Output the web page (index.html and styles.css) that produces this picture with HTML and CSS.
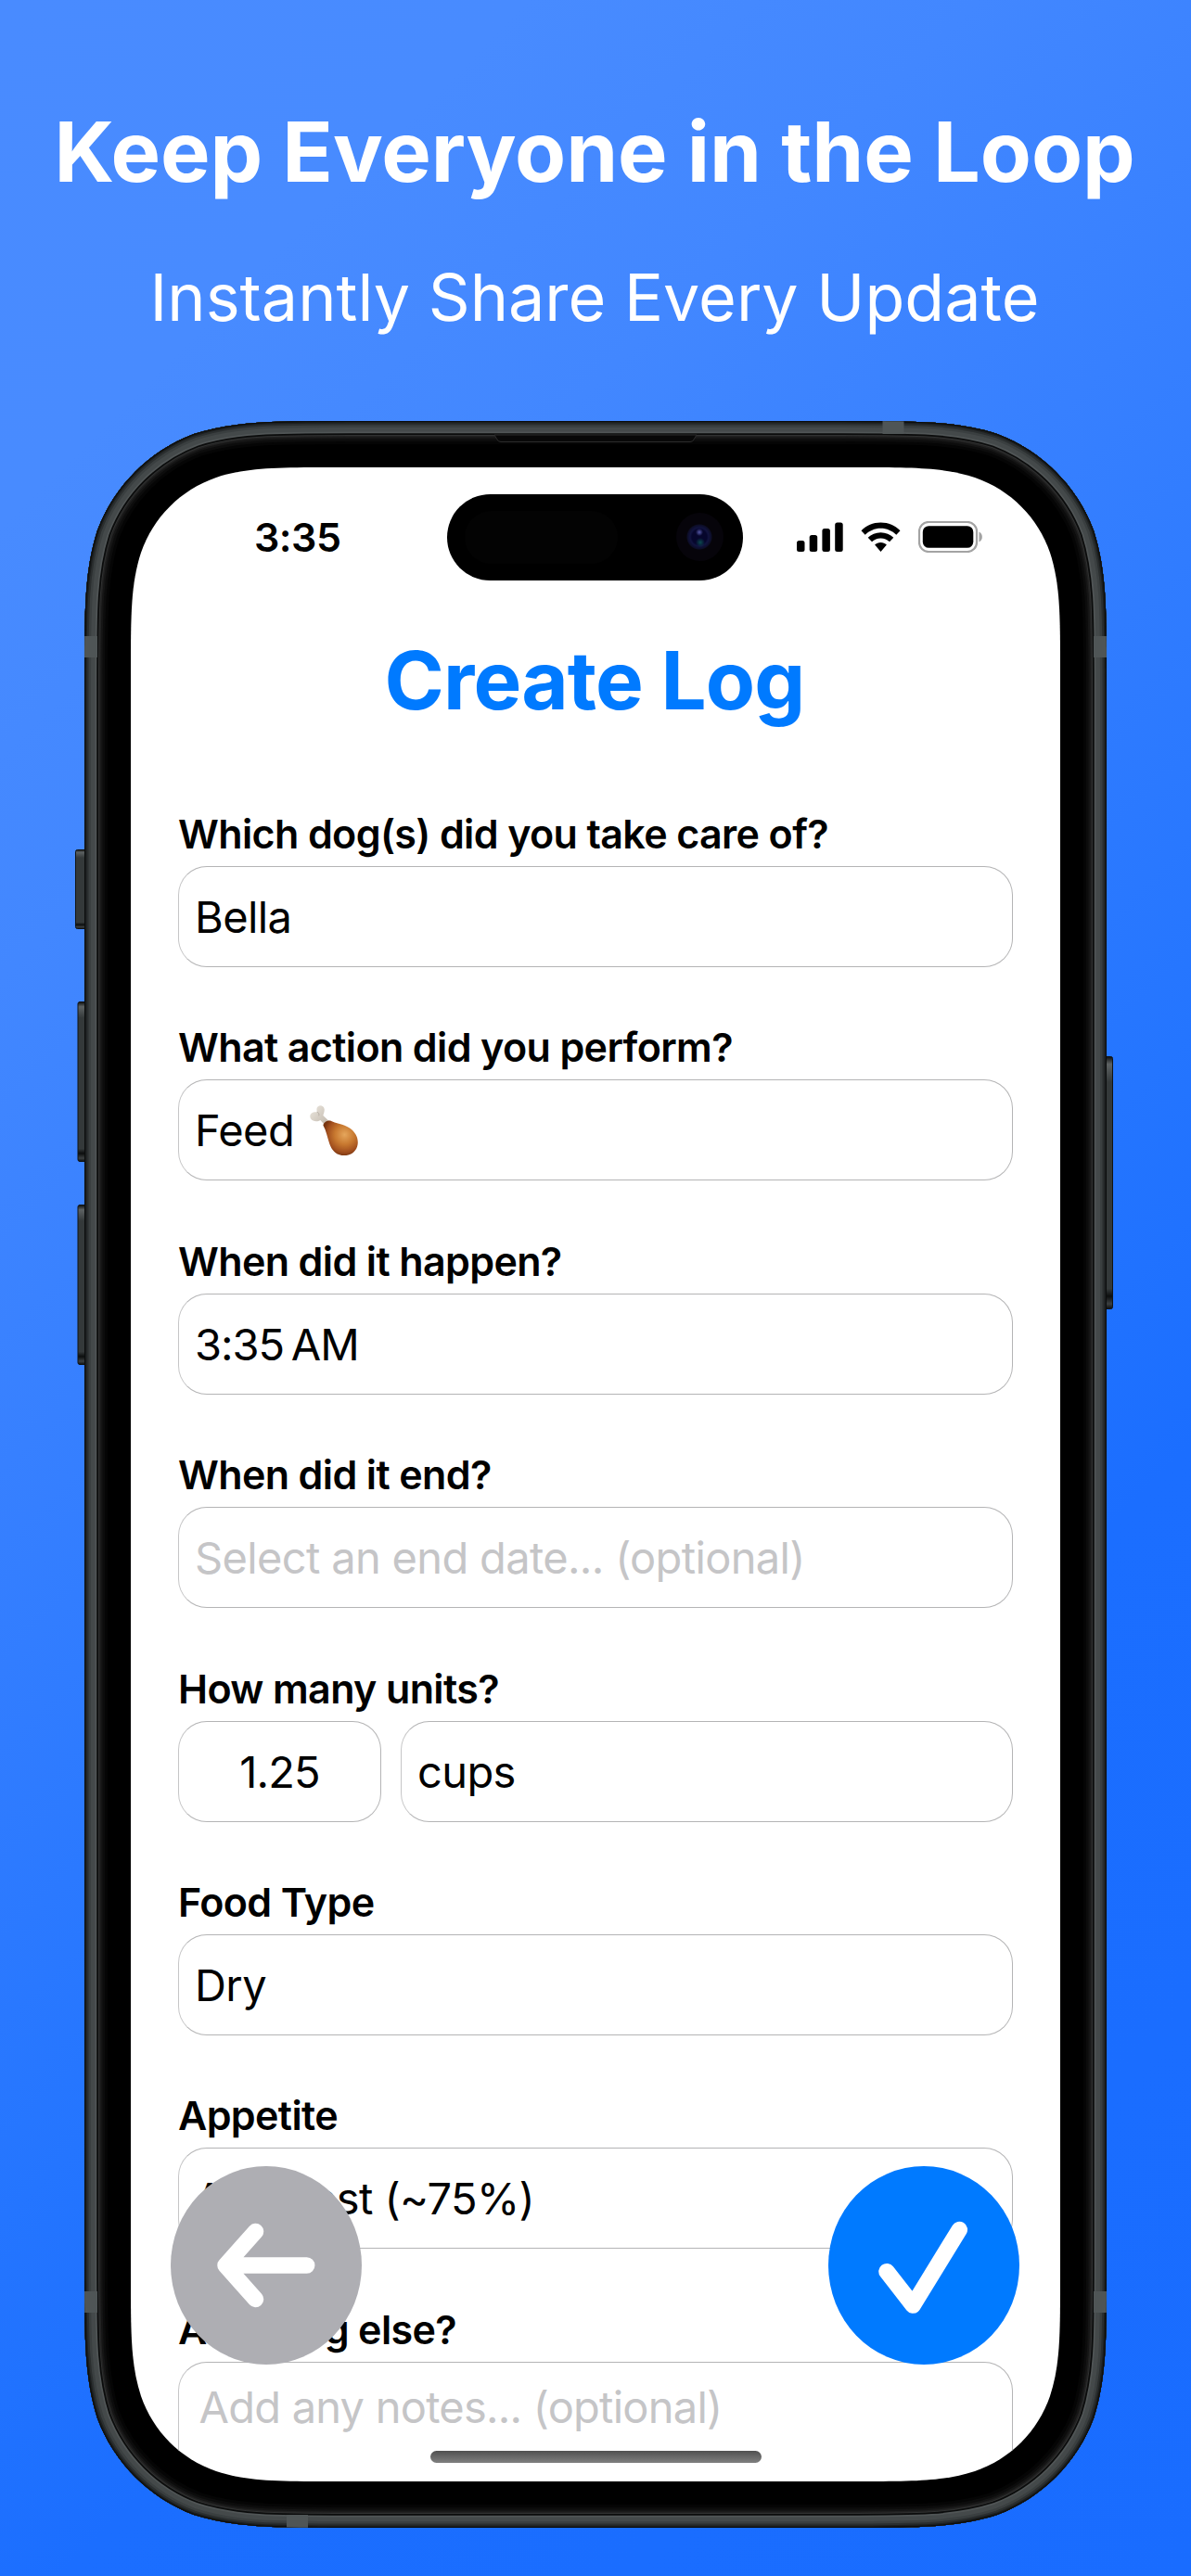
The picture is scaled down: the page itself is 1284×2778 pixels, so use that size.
FILE: index.html
```html
<!DOCTYPE html>
<html lang="en">
<head>
<meta charset="utf-8">
<title>Keep Everyone in the Loop</title>
<link rel="stylesheet" href="styles.css">
</head>
<body>
<header class="hero">
  <h1 class="hero-title">Keep Everyone in the Loop</h1>
  <p class="hero-subtitle">Instantly Share Every Update</p>
</header>
<main class="phone">
  <svg class="frame" viewBox="-12 0 1126 2272" aria-hidden="true">
    <defs>
      <path id="body" d="M286,0 L816,0 C898,0 940,0 984,14 C1032,32 1070,70 1088,118 C1102,162 1102,204 1102,286 L1102,1986 C1102,2068 1102,2110 1088,2154 C1070,2202 1032,2240 984,2258 C940,2272 898,2272 816,2272 L286,2272 C204,2272 162,2272 118,2258 C70,2240 32,2202 14,2154 C0,2110 0,2068 0,1986 L0,286 C0,204 0,162 14,118 C32,70 70,32 118,14 C162,0 204,0 286,0 Z"/>
      <clipPath id="bodyClip"><use href="#body"/></clipPath>
      <linearGradient id="key" x1="0" y1="0" x2="0" y2="1">
        <stop offset="0" stop-color="#0c0e0e"/><stop offset=".03" stop-color="#5d6263"/><stop offset=".1" stop-color="#34393a"/><stop offset=".92" stop-color="#34393a"/><stop offset=".95" stop-color="#0c0e0e"/><stop offset=".98" stop-color="#3c4041"/><stop offset="1" stop-color="#0c0e0e"/>
      </linearGradient>
    </defs>
    <g fill="url(#key)" stroke="#111414" stroke-width="1">
      <rect x="-9.5" y="462.500" width="12" height="85" rx="2"/>
      <rect x="-7" y="626.500" width="10" height="172" rx="2"/>
      <rect x="-7" y="845.500" width="10" height="172" rx="2"/>
      <rect x="1099" y="685.500" width="9.500" height="272" rx="2"/>
    </g>
    <use href="#body" fill="#000"/>
    <g clip-path="url(#bodyClip)" fill="none">
      <use href="#body" stroke="#050505" stroke-width="50"/>
      <use href="#body" stroke="#0c0c0c" stroke-width="44"/>
      <use href="#body" stroke="#151515" stroke-width="39"/>
      <use href="#body" stroke="#212121" stroke-width="35"/>
      <use href="#body" stroke="#303131" stroke-width="32"/>
      <use href="#body" stroke="#0b0c0c" stroke-width="30"/>
      <use href="#body" stroke="#505556" stroke-width="26.500"/>
      <use href="#body" stroke="#44494a" stroke-width="23"/>
      <use href="#body" stroke="#3a3f40" stroke-width="14"/>
      <use href="#body" stroke="#2a2e2f" stroke-width="9"/>
      <use href="#body" stroke="#1b1e1f" stroke-width="5"/>
      <use href="#body" stroke="#0b0d0d" stroke-width="2"/>
      <path d="M442,15 H660 L657,20 Q656,22.500 653,22.500 H449 Q446,22.500 445,20 Z" fill="#080808" stroke="#2c2c2c"/>
      <g fill="#4f5556">
        <rect x="860.500" y="0" width="23" height="14"/>
        <rect x="218" y="2258" width="23" height="14"/>
        <rect x="0" y="232" width="14" height="23"/>
        <rect x="1088" y="232" width="14" height="23"/>
        <rect x="0" y="2017" width="14" height="23"/>
        <rect x="1088" y="2017" width="14" height="23"/>
      </g>
    </g>
  </svg>
  <section class="screen">
    <div class="status">
      <span class="time">3:35</span>
      <div class="indicators">
        <svg width="50" height="34" viewBox="0 0 50 34"><rect x="0" y="21" width="8.500" height="12" rx="2.500"/><rect x="13.700" y="15" width="8.500" height="18" rx="2.500"/><rect x="27.400" y="8" width="8.500" height="25" rx="2.500"/><rect x="41.200" y="1.500" width="8.500" height="31.500" rx="2.500"/></svg>
        <svg width="43" height="34" viewBox="0 0 43 34"><path d="M21.500,1.500 C29.800,1.500 37,4.800 42.500,10.300 L38.300,14.700 C34,10.400 28,7.700 21.500,7.700 C15,7.700 9,10.400 4.700,14.700 L.500,10.300 C6,4.800 13.200,1.500 21.500,1.500 Z M21.500,12.300 C26.900,12.300 31.700,14.400 35.300,17.800 L31,22.200 C28.500,19.900 25.200,18.500 21.500,18.500 C17.800,18.500 14.500,19.900 12,22.200 L7.700,17.800 C11.300,14.400 16.100,12.300 21.500,12.300 Z M21.500,23 C24,23 26.200,23.900 27.900,25.400 L21.500,33 L15.100,25.400 C16.800,23.900 19,23 21.500,23 Z"/></svg>
        <svg width="70" height="34" viewBox="0 0 70 34"><rect x="1" y="1" width="62" height="32" rx="10" fill="none" stroke="#a3a3a3" stroke-width="2.200"/><rect x="4.800" y="5.200" width="54.500" height="23.600" rx="6.500"/><path d="M65.500,11.500 C70,13.500 70,20.500 65.500,22.500 Z" fill="#a3a3a3"/></svg>
      </div>
      <div class="island"><i class="sensor"></i><i class="lens"></i></div>
    </div>
    <h2 class="title">Create Log</h2>
    <form class="form">
      <div class="group"><label class="label">Which dog(s) did you take care of?</label><div class="field">Bella</div></div>
      <div class="group"><label class="label">What action did you perform?</label><div class="field">Feed
        <svg class="drumstick" viewBox="0 0 156 164" aria-label="Poultry leg">
          <defs>
            <radialGradient id="meat" cx=".62" cy=".4" r=".62"><stop offset="0" stop-color="#e5a65c"/><stop offset=".45" stop-color="#c87930"/><stop offset=".8" stop-color="#a24f1e"/><stop offset="1" stop-color="#783511"/></radialGradient>
            <linearGradient id="bone" x1="0" y1="0" x2="1" y2="1"><stop offset="0" stop-color="#ece7df"/><stop offset="1" stop-color="#bfb6aa"/></linearGradient>
          </defs>
          <path d="M22,12 C24,-2 44,-3 47,12 C48,21 44,27 43,33 L62,51 L49,65 L34,48 C26,54 10,54 3,44 C-4,32 5,20 23,22 Z" fill="url(#bone)"/>
          <path d="M23,22 C29,23 31,29 29,34" fill="none" stroke="#aaa198" stroke-width="2"/>
          <path d="M43,65 C45,56 54,49 66,50 C84,59 108,61 129,74 C149,88 158,108 155,127 C152,149 133,163 111,163 C85,163 72,147 64,126 C57,105 53,82 43,65 Z" fill="url(#meat)"/>
        </svg></div></div>
      <div class="group"><label class="label">When did it happen?</label><div class="field clock">3:35&#8239;AM</div></div>
      <div class="group"><label class="label">When did it end?</label><div class="field placeholder">Select an end date... (optional)</div></div>
      <div class="group"><label class="label">How many units?</label><div class="row"><div class="field amount">1.25</div><div class="field unit">cups</div></div></div>
      <div class="group"><label class="label">Food Type</label><div class="field">Dry</div></div>
      <div class="group"><label class="label">Appetite</label><div class="field">Ate most (~75%)</div></div>
      <div class="group"><label class="label">Anything else?</label><div class="field placeholder notes">Add any notes... (optional)</div></div>
    </form>
    <button class="action back" aria-label="Back"><svg viewBox="0 0 206 214"><path d="M91.500,70.500 L59,107 L91.500,143.500 M59,107 H146.700"/></svg></button>
    <button class="action save" aria-label="Save"><svg viewBox="0 0 206 214"><path d="M63,113.700 L91.300,150 L141.300,68.500"/></svg></button>
    <div class="home"></div>
  </section>
</main>
</body>
</html>
```
FILE: styles.css
```css
* { box-sizing: border-box; }

body {
  margin: 0;
  width: 1284px;
  height: 2778px;
  overflow: hidden;
  display: flex;
  flex-direction: column;
  align-items: center;
  font-family: Inter, "Liberation Sans", sans-serif;
  color: #000;
  background: linear-gradient(135deg, #498bff 0, #488bff 14%, #4287ff 26%, #3780ff 39%, #2475ff 59%, #1b6eff 70%, #196cff 100%);
}

.hero {
  height: 454px;
  padding: 109px 2px 0 0;
  text-align: center;
  color: #fff;
  white-space: nowrap;
}
.hero-title { margin: 0; font-size: 90px; line-height: 110px; font-weight: 700; letter-spacing: -0.1px; }
.hero-subtitle { margin: 57px 0 0; font-size: 70px; line-height: 90px; font-weight: 400; letter-spacing: 0; }

.phone {
  position: relative;
  width: 1102px;
  height: 2272px;
  padding: 50px;
}
.frame { position: absolute; left: -12px; top: 0; width: 1126px; height: 2272px; }

.screen {
  position: relative;
  width: 1002px;
  height: 2172px;
  background: #fff;
  clip-path: path("M221,0 L781,0 C844,0 876,0 910,11 C948,24 978,54 991,92 C1002,126 1002,158 1002,221 L1002,1951 C1002,2014 1002,2046 991,2080 C978,2118 948,2148 910,2161 C876,2172 844,2172 781,2172 L221,2172 C158,2172 126,2172 92,2161 C54,2148 24,2118 11,2080 C0,2046 0,2014 0,1951 L0,221 C0,158 0,126 11,92 C24,54 54,24 92,11 C126,0 158,0 221,0 Z");
}

.status {
  position: relative;
  height: 150px;
  padding: 0 83px 0 133px;
  display: flex;
  align-items: center;
  justify-content: space-between;
}
.time { font-size: 43px; font-weight: 600; letter-spacing: -0.5px; }
.indicators { display: flex; gap: 19px; align-items: center; }
.indicators svg { display: block; }

.island {
  position: absolute;
  left: 341px;
  top: 29px;
  width: 319px;
  height: 93px;
  border-radius: 47px;
  background: #000;
}
.sensor { position: absolute; left: 19px; top: 18px; width: 165px; height: 57px; border-radius: 29px; background: #030303; }
.lens {
  position: absolute;
  left: 247px;
  top: 20px;
  width: 51px;
  height: 52px;
  border-radius: 50%;
  background:
    radial-gradient(circle at 25px 21px, #5658a8 0, transparent 4px),
    radial-gradient(circle at 26px 32px, #0c4a4e 0, transparent 5px),
    radial-gradient(circle at 25px 26px, #06062c 0 8px, #11133f 10px, #0c0d26 13px, #06040a 14px);
}

.title { margin: 30px 0 89px; padding-right: 2px; font-size: 87px; line-height: 100px; font-weight: 700; letter-spacing: -0.9px; color: #007aff; text-align: center; }

.form { padding: 0 51px; display: flex; flex-direction: column; gap: 60.4px; white-space: nowrap; }
.group { display: flex; flex-direction: column; gap: 10px; }
.label { height: 51px; padding-top: 1px; font-size: 43px; line-height: 50px; font-weight: 600; letter-spacing: -0.63px; }
.row { display: flex; gap: 21px; }
.field {
  height: 109px;
  padding-left: 17px;
  display: flex;
  align-items: center;
  font-size: 47px;
  letter-spacing: -0.6px;
  border: 1px solid #b4b4b5;
  border-left-color: #c6c6c7;
  border-radius: 31px;
}
.clock { letter-spacing: -1px; }
.drumstick { width: 52px; height: 54.5px; margin-left: 17px; }
.amount { width: 219px; padding: 0; justify-content: center; letter-spacing: -0.8px; }
.unit { flex: 1; }
.placeholder { color: #c5c5c7; letter-spacing: -0.66px; }
.notes { height: 220px; align-items: flex-start; padding: 19px 0 0 21.5px; line-height: 57px; letter-spacing: -0.76px; }

.action {
  position: absolute;
  top: 1832px;
  width: 206px;
  height: 214px;
  padding: 0;
  border: 0;
  border-radius: 50%;
}
.action svg { display: block; width: 206px; height: 214px; fill: none; stroke: #fff; stroke-width: 17.5px; stroke-linecap: round; stroke-linejoin: round; }
.back { left: 43px; background: #aeaeb3; }
.save { left: 752px; background: #007aff; }

.home { position: absolute; left: 323px; top: 2139px; width: 357px; height: 13px; border-radius: 7px; background: linear-gradient(#505050, #808080); }
```
